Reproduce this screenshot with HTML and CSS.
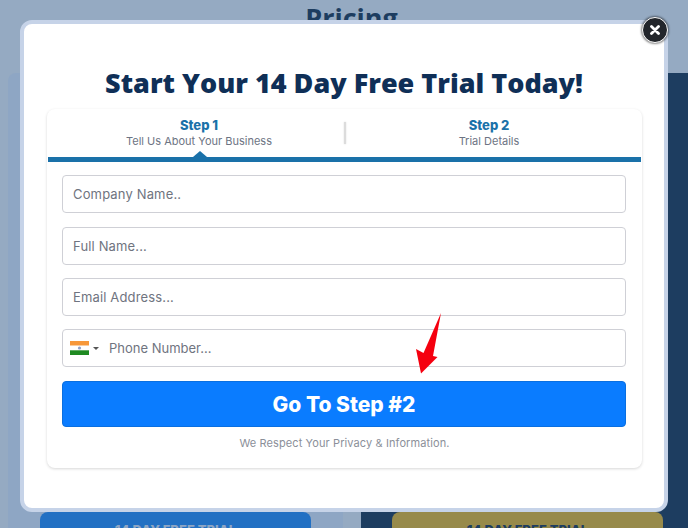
FILE: index.html
```html
<!DOCTYPE html>
<html lang="en">
<head>
    <meta charset="UTF-8">
    <title>Pricing</title>
    <link rel="stylesheet" href="styles.css">
</head>
<body>
    <!-- Dimmed page behind the popup -->
    <div class="page">
        <h2 class="page-title">Pricing</h2>
        <div class="plans">
            <div class="plan plan-light">
                <div class="plan-button plan-button-blue">14 DAY FREE TRIAL</div>
            </div>
            <div class="plan plan-dark">
                <div class="plan-button plan-button-gold">14 DAY FREE TRIAL</div>
            </div>
        </div>
    </div>

    <!-- Popup -->
    <div class="overlay">
        <div class="modal">
            <button class="close-btn" aria-label="Close">
                <svg width="10" height="10" viewBox="0 0 10 10"><path d="M1.5 1.5L8.5 8.5M8.5 1.5L1.5 8.5" stroke="#fff" stroke-width="2.8" stroke-linecap="round"/></svg>
            </button>
            <h1 class="modal-title">Start Your 14 Day Free Trial Today!</h1>
            <div class="form-card">
                <div class="steps">
                    <div class="step step-active">
                        <div class="step-name">Step 1</div>
                        <div class="step-desc">Tell Us About Your Business</div>
                    </div>
                    <div class="step step-next">
                        <div class="step-name">Step 2</div>
                        <div class="step-desc">Trial Details</div>
                    </div>
                </div>
                <form class="signup-form">
                    <input class="field" type="text" placeholder="Company Name..">
                    <input class="field" type="text" placeholder="Full Name...">
                    <input class="field" type="text" placeholder="Email Address...">
                    <div class="field phone-field">
                        <svg class="flag" width="19" height="14" viewBox="0 0 19 14">
                            <rect width="19" height="4.7" fill="#f7983a"/>
                            <rect y="4.7" width="19" height="4.6" fill="#fff"/>
                            <rect y="9.3" width="19" height="4.7" fill="#1f8a22"/>
                            <circle cx="9.5" cy="7" r="1.6" fill="#8fa0c8"/>
                        </svg>
                        <span class="flag-arrow"></span>
                        <input class="phone-input" type="text" placeholder="Phone Number...">
                    </div>
                    <button class="submit-btn" type="button">Go To Step #2</button>
                </form>
                <p class="privacy">We Respect Your Privacy &amp; Information.</p>
                <svg class="arrow" width="26" height="62" viewBox="0 0 26 62">
                    <path d="M25 0L17 43L21.5 44L5 60.5L0 36L7.5 40Z" fill="#f5000f"/>
                </svg>
            </div>
        </div>
    </div>
</body>
</html>
```

FILE: styles.css
```css
* {
    margin: 0;
    padding: 0;
    box-sizing: border-box;
}

body {
    width: 688px;
    height: 528px;
    overflow: hidden;
    position: relative;
    font-family: Inter, 'Noto Sans', sans-serif;
    background: #95aac2;
}

/* Page behind the popup */
.page {
    height: 528px;
    overflow: hidden;
}

.page-title {
    height: 73px;
    padding-left: 15px;
    padding-top: 1px;
    text-align: center;
    font-family: 'Open Sans', sans-serif;
    font-size: 27px;
    font-weight: 700;
    line-height: 34px;
    color: #1d3d60;
}

.plans {
    height: 455px;
    display: grid;
    grid-template-columns: 335px 327px;
    column-gap: 18px;
    padding-left: 8px;
}

.plan {
    overflow: hidden;
    border-radius: 8px 8px 0 0;
}

.plan-light {
    background: #8ea6c4;
    padding: 439px 32px 0;
}

.plan-dark {
    background: #1d3d60;
    margin-right: -26px;
    padding: 439px 25px 0 31px;
}

.plan-button {
    height: 40px;
    width: 271px;
    padding-top: 10px;
    border-radius: 8px;
    text-align: center;
    font-size: 13px;
    font-weight: 800;
}

.plan-button-blue {
    background: #2270c3;
    color: #8ea6c4;
}

.plan-button-gold {
    background: #978a4a;
    color: #1d3d60;
}

/* Popup */
.overlay {
    position: absolute;
    top: 20px;
    left: 20px;
}

.modal {
    position: relative;
    width: 648px;
    height: 492px;
    padding: 44px 19px 0 23px;
    background: #fff;
    border: 4px solid #c6d3e8;
    border-radius: 12px;
}

.close-btn {
    position: absolute;
    top: -7px;
    right: -4px;
    width: 26px;
    height: 26px;
    display: flex;
    align-items: center;
    justify-content: center;
    background: #23262b;
    border: 1.5px solid #fff;
    border-radius: 50%;
    box-shadow: 0 0 2px 1px rgba(0,0,0,0.45);
}

.modal-title {
    height: 41px;
    margin-left: -4px;
    text-align: center;
    font-family: 'Open Sans', sans-serif;
    font-size: 27px;
    font-weight: 800;
    line-height: 30px;
    color: #0f2f57;
}

.form-card {
    position: relative;
    width: 595px;
    height: 359px;
    padding: 0 1px;
    background: #fff;
    border-radius: 8px;
    box-shadow: 0 1px 3px rgba(0,0,0,0.16);
}

.steps {
    display: grid;
    grid-template-columns: 297px 1fr;
    height: 53px;
    padding-top: 8px;
    border-bottom: 5px solid #1a71a9;
}

.step {
    position: relative;
    text-align: center;
}

.step-active {
    padding-left: 6px;
    padding-right: 1px;
}

.step-next {
    padding-right: 8px;
}

.step-active::before {
    content: "";
    position: absolute;
    top: 5px;
    right: -1px;
    width: 2px;
    height: 22px;
    background: #dcdcdc;
    box-shadow: 0 0 2px #dcdcdc;
}

/* little notch on the bar under the active step */
.step-active::after {
    content: "";
    position: absolute;
    left: 50%;
    bottom: 0;
    margin-left: -4px;
    border-left: 7px solid transparent;
    border-right: 7px solid transparent;
    border-bottom: 6px solid #1a71a9;
}

.step-name {
    font-size: 13px;
    font-weight: 800;
    line-height: 17px;
    color: #1a71a9;
}

.step-desc {
    font-size: 11px;
    line-height: 15px;
    color: #6d7483;
}

.signup-form {
    display: flex;
    flex-direction: column;
    padding: 13px 14px 0;
}

.field {
    flex: none;
    width: 564px;
    height: 38px;
    margin-bottom: 13px;
    padding: 0 10px;
    background: #fff;
    border: 1px solid #cfd0d6;
    border-radius: 4px;
    font-family: Inter, sans-serif;
    font-size: 13px;
    letter-spacing: 0.15px;
}

.field:first-child {
    margin-bottom: 14px;
}

.field::placeholder,
.phone-input::placeholder {
    color: #6f7480;
    opacity: 1;
}

.phone-field {
    display: flex;
    align-items: center;
    padding: 0 7px;
    margin-bottom: 14px;
}

.flag-arrow {
    margin-left: 4px;
    border-left: 3px solid transparent;
    border-right: 3px solid transparent;
    border-top: 3px solid #555;
}

.phone-input {
    flex: 1;
    margin-left: 10px;
    border: none;
    outline: none;
    font-family: Inter, sans-serif;
    font-size: 13px;
}

.submit-btn {
    flex: none;
    width: 564px;
    height: 46px;
    background: #0a7cff;
    border: 1px solid #0a6fe0;
    border-radius: 4px;
    font-family: Inter, sans-serif;
    font-size: 21px;
    font-weight: 800;
    color: #fff;
}

.privacy {
    margin-top: 9px;
    text-align: center;
    font-size: 11px;
    letter-spacing: 0.1px;
    color: #8b8f99;
}

.arrow {
    position: absolute;
    top: 204px;
    left: 369px;
}
```
